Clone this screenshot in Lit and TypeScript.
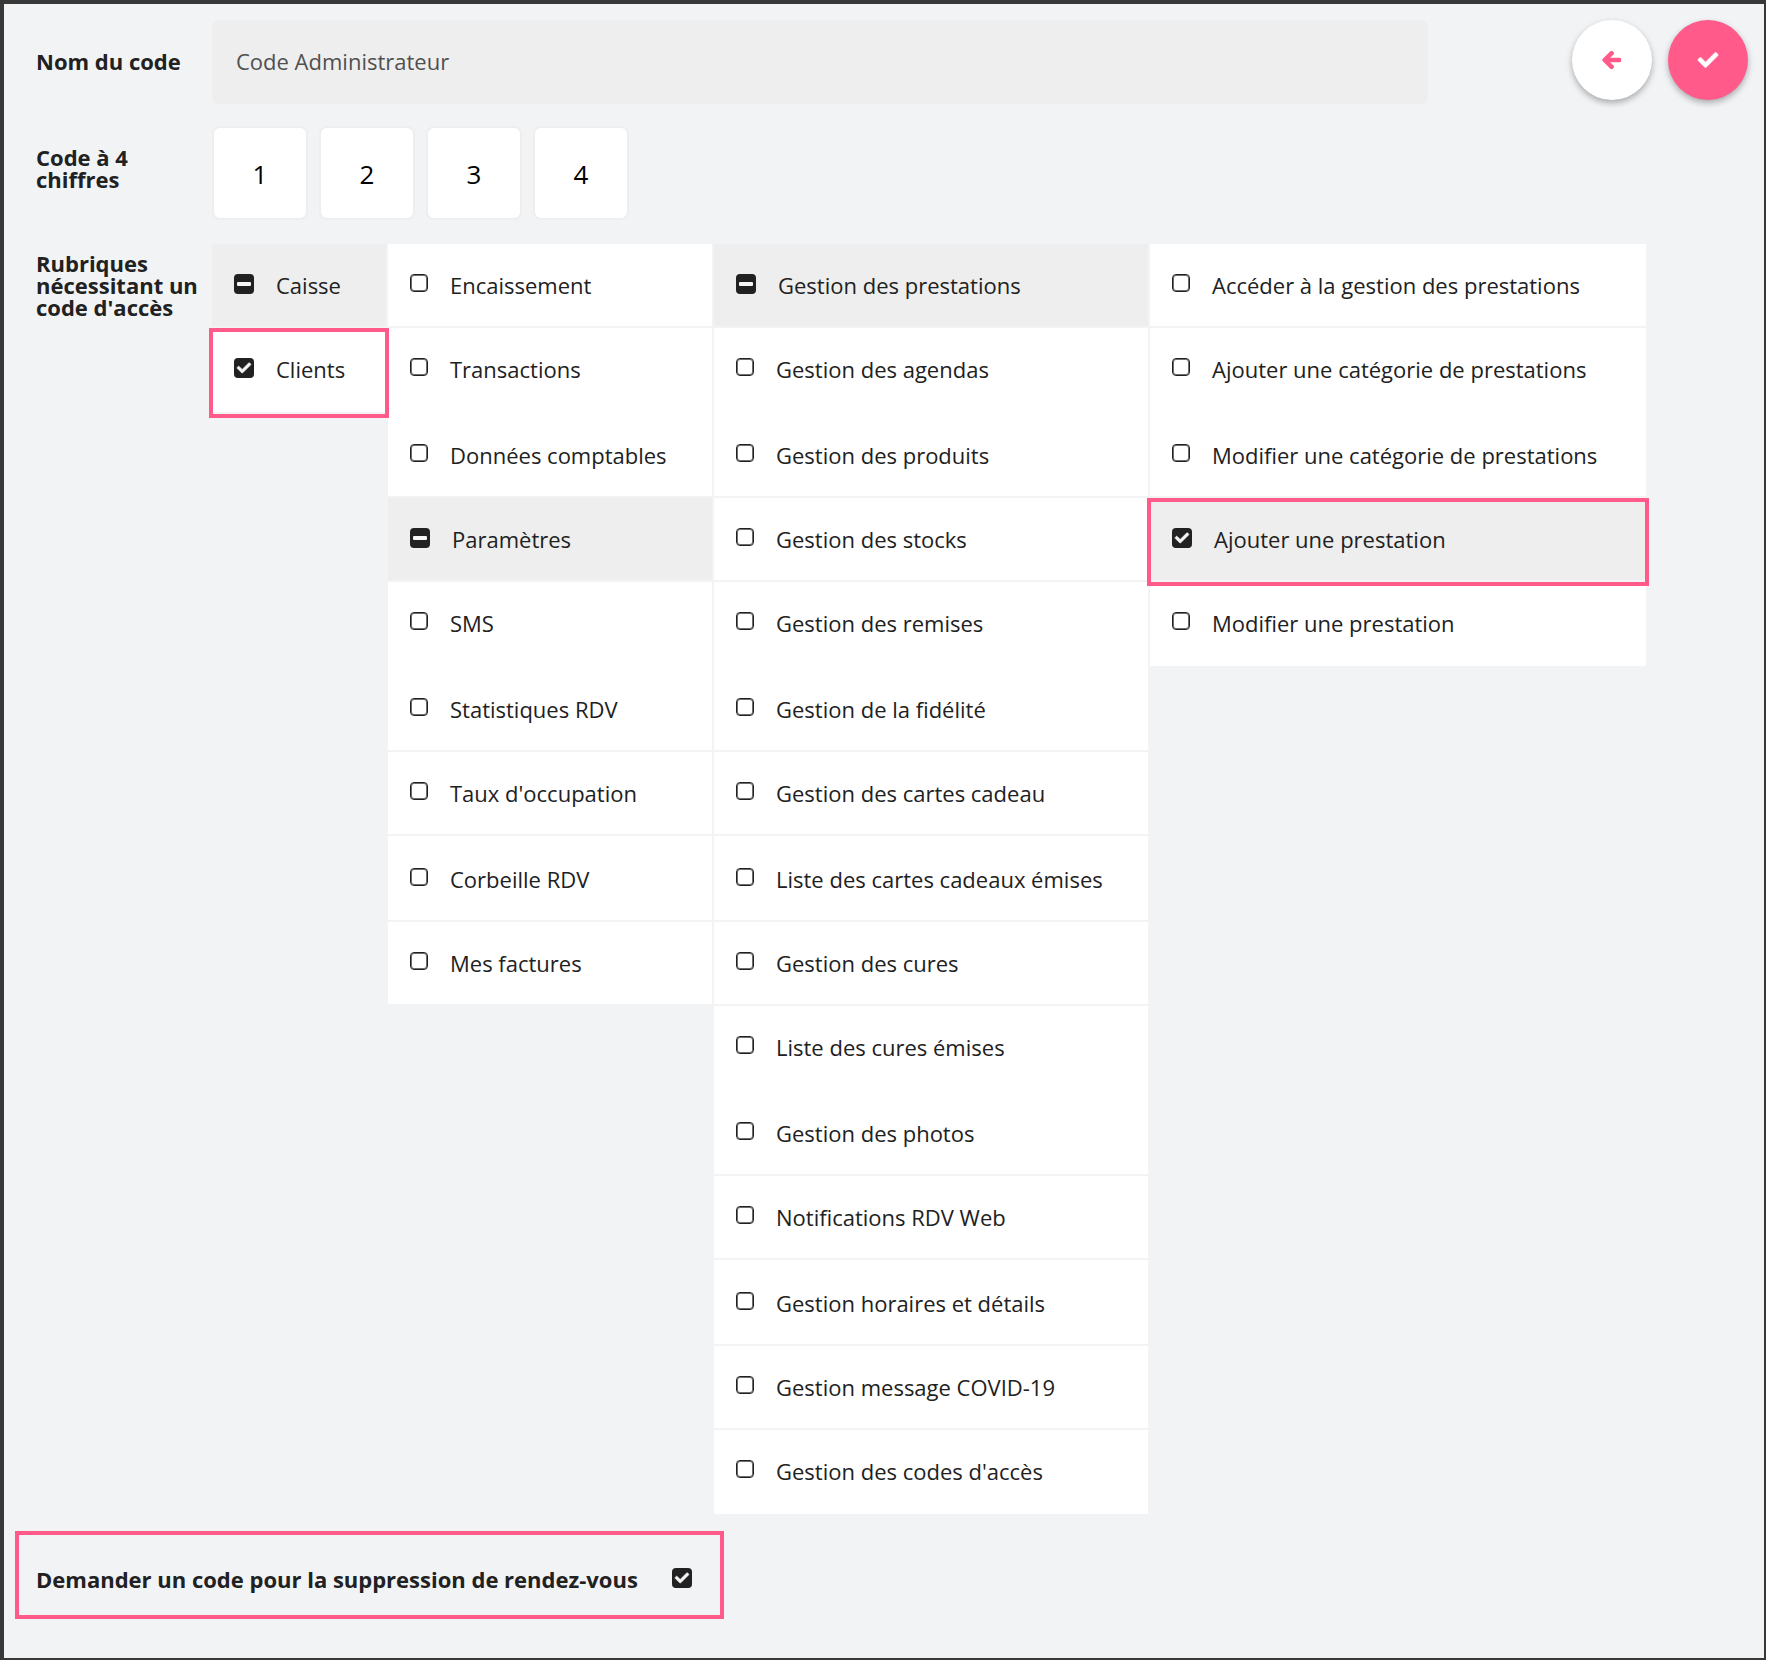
import { LitElement, html, svg, css, nothing } from "lit";
import { customElement, property } from "lit/decorators.js";
import { classMap } from "lit/directives/class-map.js";

type Mark = "empty" | "partial" | "checked";

interface Section {
  label: string;
  mark?: Mark;
  shaded?: boolean;
  framed?: boolean;
}

const columns: Section[][] = [
  [
    { label: "Caisse", mark: "partial", shaded: true },
    { label: "Clients", mark: "checked", framed: true },
  ],
  [
    { label: "Encaissement" },
    { label: "Transactions" },
    { label: "Données comptables" },
    { label: "Paramètres", mark: "partial", shaded: true },
    { label: "SMS" },
    { label: "Statistiques RDV" },
    { label: "Taux d'occupation" },
    { label: "Corbeille RDV" },
    { label: "Mes factures" },
  ],
  [
    { label: "Gestion des prestations", mark: "partial", shaded: true },
    { label: "Gestion des agendas" },
    { label: "Gestion des produits" },
    { label: "Gestion des stocks" },
    { label: "Gestion des remises" },
    { label: "Gestion de la fidélité" },
    { label: "Gestion des cartes cadeau" },
    { label: "Liste des cartes cadeaux émises" },
    { label: "Gestion des cures" },
    { label: "Liste des cures émises" },
    { label: "Gestion des photos" },
    { label: "Notifications RDV Web" },
    { label: "Gestion horaires et détails" },
    { label: "Gestion message COVID-19" },
    { label: "Gestion des codes d'accès" },
  ],
  [
    { label: "Accéder à la gestion des prestations" },
    { label: "Ajouter une catégorie de prestations" },
    { label: "Modifier une catégorie de prestations" },
    { label: "Ajouter une prestation", mark: "checked", shaded: true, framed: true },
    { label: "Modifier une prestation" },
  ],
];

// Zero-based rows: taller ones, those with no rule below, and those with extra room above the label.
const tallRows = new Set([1, 4, 7, 9, 12, 14]);
const openRows = new Set([1, 4, 9]);
const lowRows = new Set([7, 12]);

// Both glyphs are drawn on a 512-unit grid.
const checkPath =
  "M173.898 439.404l-166.4-166.4c-9.997-9.997-9.997-26.206 0-36.204l36.203-36.204c9.997-9.998 26.207-9.998 36.204 0L192 312.69 432.095 72.596c9.997-9.997 26.207-9.997 36.204 0l36.203 36.204c9.997 9.997 9.997 26.206 0 36.204l-294.4 294.401c-9.998 9.997-26.207 9.997-36.204-.001z";
const arrowPath =
  "M257.5 445.1l-22.2 22.2c-9.4 9.4-24.6 9.4-33.9 0L7 273c-9.4-9.4-9.4-24.6 0-33.9L201.4 44.7c9.4-9.4 24.6-9.4 33.9 0l22.2 22.2c9.5 9.5 9.3 25-.4 34.3L136.6 216H424c13.3 0 24 10.7 24 24v32c0 13.3-10.7 24-24 24H136.6l120.5 114.8c9.8 9.3 10 24.8.4 34.3z";

@customElement("tick-box")
export class TickBox extends LitElement {
  @property() mark: Mark = "empty";
  @property() label = "";
  @property({ type: Boolean }) before = false;

  static styles = css`
    :host {
      display: flex;
    }
    .tick {
      display: flex;
      align-items: flex-start;
      gap: 22px;
      white-space: nowrap;
      cursor: pointer;
    }
    .tick.before {
      flex-direction: row-reverse;
      gap: 34px;
      font-weight: 700;
    }
    .box {
      display: grid;
      flex: none;
    }
    input,
    svg {
      grid-area: 1 / 1;
    }
    input {
      appearance: none;
      box-sizing: border-box;
      width: 20px;
      height: 20px;
      margin: 0;
      border-radius: 4px;
      background: #212121;
    }
    input.empty {
      width: 18px;
      height: 18px;
      border: 1px solid #212121;
      background: #fff;
      box-shadow: inset 0 0 0 1px #212121a6;
    }
    svg {
      width: 20px;
      height: 20px;
      fill: #f6f6f6;
      pointer-events: none;
    }
    .text {
      line-height: 22px;
    }
  `;

  render() {
    const glyph =
      this.mark === "partial"
        ? svg`<rect x="3" y="8" width="14" height="4" rx="1" />`
        : svg`<path
            transform="translate(3 3) scale(0.027)"
            stroke="#f6f6f6"
            stroke-width="24"
            d=${checkPath}
          />`;
    return html`
      <label class=${classMap({ tick: true, before: this.before })}>
        <span class="box">
          <input
            type="checkbox"
            class=${this.mark}
            .checked=${this.mark === "checked"}
            .indeterminate=${this.mark === "partial"}
          />
          ${this.mark === "empty"
            ? nothing
            : html`<svg viewBox="0 0 20 20" aria-hidden="true">${glyph}</svg>`}
        </span>
        <span class="text">${this.label}</span>
      </label>
    `;
  }
}

@customElement("app-root")
export class AppRoot extends LitElement {
  static styles = css`
    :host {
      display: block;
      box-sizing: border-box;
      min-height: 100vh;
      padding: 4px 2px 2px 4px;
      background: #393838;
      font-family: "Open Sans", "Noto Sans", sans-serif;
      font-size: 22px;
      color: #212121;
    }
    .panel {
      box-sizing: border-box;
      min-height: calc(100vh - 6px);
      padding: 16px 16px 32px 32px;
      background: #f1f3f5;
    }
    .line {
      display: grid;
      grid-template-columns: 176px minmax(0, 1fr);
    }
    .heading {
      margin: 0;
      font-size: 22px;
      font-weight: 700;
      line-height: 22px;
    }
    .name {
      grid-template-columns: 176px minmax(0, 1fr) auto;
      align-items: center;
    }
    .name .heading {
      padding-bottom: 2px;
    }
    .field {
      box-sizing: border-box;
      width: 100%;
      height: 84px;
      padding: 0 24px 2px;
      border: 0;
      border-radius: 8px;
      background: #eee;
      font: inherit;
      color: #505050;
    }
    .actions {
      display: flex;
      gap: 16px;
      align-self: start;
      margin-left: 144px;
    }
    .round {
      display: grid;
      place-items: center;
      width: 80px;
      height: 80px;
      padding: 0;
      border: 0;
      border-radius: 50%;
      background: #fff;
      color: #ff5a8a;
      box-shadow: 0 3px 6px #0000004d;
      cursor: pointer;
    }
    .round.primary {
      background: #ff5a8a;
      color: #fff;
    }
    .round svg {
      height: 20px;
      overflow: visible;
      fill: currentColor;
      stroke: currentColor;
      stroke-width: 36px;
      stroke-linejoin: round;
    }
    .round.primary svg {
      stroke-width: 20px;
    }
    .code {
      align-items: center;
      margin-top: 22px;
    }
    .code .heading {
      padding: 0 48px 10px 0;
    }
    .digits {
      display: flex;
      gap: 11px;
    }
    .digit {
      box-sizing: border-box;
      width: 96px;
      height: 94px;
      padding: 2px 0 0;
      border: 2px solid #eee;
      border-radius: 8px;
      background: #fff;
      font: inherit;
      font-size: 26px;
      text-align: center;
      color: #000;
    }
    .access {
      margin-top: 24px;
    }
    .access .heading {
      padding-top: 8px;
    }
    .columns {
      display: grid;
      grid-template-columns: 174fr 324fr 434fr 496fr;
      gap: 2px;
      align-items: start;
      margin-right: 102px;
    }
    .column {
      margin: 0;
      padding: 0;
      list-style: none;
    }
    .cell {
      position: relative;
      box-sizing: border-box;
      height: 84px;
      padding: 30px 22px 0;
      border-bottom: 2px solid #f1f3f5;
      background: #fff;
    }
    .cell.tall {
      height: 86px;
    }
    .cell.low {
      padding-top: 32px;
    }
    .cell.open:not(:last-child) {
      border-bottom-color: #fff;
    }
    .cell.shaded {
      background: #eee;
    }
    .cell.framed {
      z-index: 1;
    }
    .cell.framed::after {
      content: "";
      position: absolute;
      inset: 0 -3px -6px;
      border: 4px solid #ff5a8a;
      pointer-events: none;
    }
    .removal {
      width: fit-content;
      margin: 15px 0 0 -21px;
      padding: 33px 28px 25px 17px;
      border: 4px solid #ff5a8a;
    }
  `;

  render() {
    return html`
      <main class="panel">
        <div class="line name">
          <label class="heading" for="name">Nom du code</label>
          <input class="field" id="name" type="text" value="Code Administrateur" />
          <div class="actions">
            <button class="round" type="button" aria-label="Retour">
              <svg viewBox="0 0 448 512" aria-hidden="true"><path d=${arrowPath} /></svg>
            </button>
            <button class="round primary" type="button" aria-label="Valider">
              <svg viewBox="0 0 512 512" aria-hidden="true"><path d=${checkPath} /></svg>
            </button>
          </div>
        </div>

        <div class="line code">
          <h2 class="heading" id="code-title">Code à 4 chiffres</h2>
          <div class="digits" role="group" aria-labelledby="code-title">
            ${["1", "2", "3", "4"].map(
              (digit) => html`
                <input
                  class="digit"
                  type="text"
                  inputmode="numeric"
                  maxlength="1"
                  aria-label="Chiffre ${digit}"
                  .value=${digit}
                />
              `,
            )}
          </div>
        </div>

        <div class="line access">
          <h2 class="heading">Rubriques nécessitant un code d'accès</h2>
          <div class="columns">
            ${columns.map(
              (sections) => html`
                <ul class="column">
                  ${sections.map(
                    (section, row) => html`
                      <li
                        class=${classMap({
                          cell: true,
                          tall: tallRows.has(row),
                          open: openRows.has(row),
                          low: lowRows.has(row),
                          shaded: !!section.shaded,
                          framed: !!section.framed,
                        })}
                      >
                        <tick-box
                          .mark=${section.mark ?? "empty"}
                          .label=${section.label}
                        ></tick-box>
                      </li>
                    `,
                  )}
                </ul>
              `,
            )}
          </div>
        </div>

        <div class="removal">
          <tick-box
            before
            mark="checked"
            label="Demander un code pour la suppression de rendez-vous"
          ></tick-box>
        </div>
      </main>
    `;
  }
}
